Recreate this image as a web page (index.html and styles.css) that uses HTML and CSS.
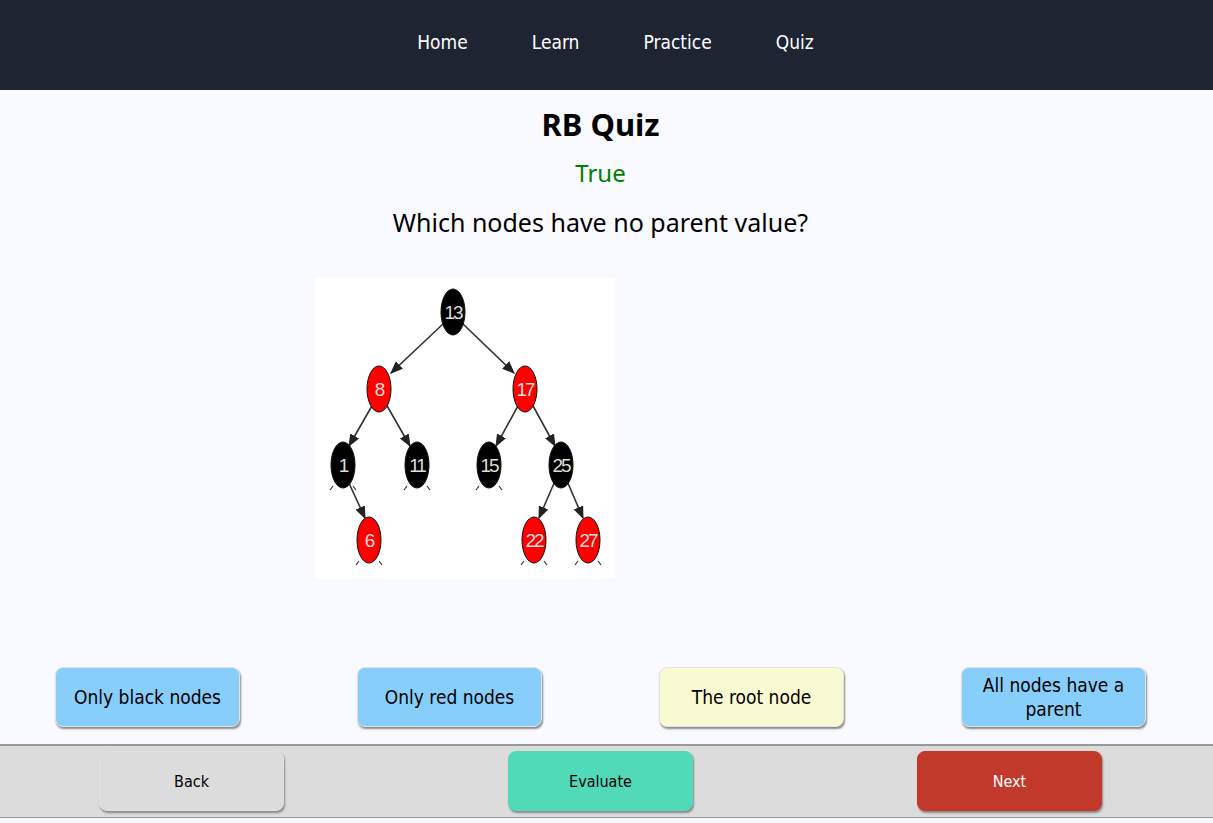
FILE: index.html
```html
<!DOCTYPE html>
<html lang="en">
<head>
<meta charset="utf-8">
<title>RB Quiz</title>
<link rel="stylesheet" href="styles.css">
</head>
<body>
<nav class="topnav">
  <ul class="navlist">
    <li><a href="#">Home</a></li>
    <li><a href="#">Learn</a></li>
    <li><a href="#">Practice</a></li>
    <li><a href="#">Quiz</a></li>
  </ul>
</nav>
<main class="quiz">
  <h1 class="title">RB Quiz</h1>
  <p class="result">True</p>
  <p class="question">Which nodes have no parent value?</p>
  <div class="figure-row">
    <div class="figure">
      <svg width="300" height="300" viewBox="0 0 300 300">
        <defs>
          <marker id="arr" viewBox="0 0 10 10" refX="9" refY="5" markerWidth="8" markerHeight="8" orient="auto-start-reverse">
            <path d="M0 1 L10 5 L0 9 z" fill="#222"/>
          </marker>
        </defs>
        <rect width="300" height="300" fill="#fff"/>
        <g stroke="#333" stroke-width="1.6" fill="none">
          <line x1="128" y1="46" x2="76" y2="95" marker-end="url(#arr)"/>
          <line x1="148" y1="46" x2="199" y2="95" marker-end="url(#arr)"/>
          <line x1="58" y1="126" x2="34" y2="168" marker-end="url(#arr)"/>
          <line x1="71" y1="126" x2="95" y2="168" marker-end="url(#arr)"/>
          <line x1="204" y1="126" x2="181" y2="168" marker-end="url(#arr)"/>
          <line x1="217" y1="126" x2="240" y2="168" marker-end="url(#arr)"/>
          <line x1="33" y1="203" x2="50" y2="240" marker-end="url(#arr)"/>
          <line x1="240" y1="203" x2="224" y2="240" marker-end="url(#arr)"/>
          <line x1="252" y1="203" x2="268" y2="240" marker-end="url(#arr)"/>
        </g>
        <g stroke="#333" stroke-width="1.2">
          <path d="M18 208 l-3 4 M38 208 l3 4 M92 208 l-3 4 M112 208 l3 4 M164 208 l-3 4 M184 208 l3 4"/>
          <path d="M44 283 l-3 4 M64 283 l3 4 M209 283 l-3 4 M229 283 l3 4 M263 283 l-3 4 M283 283 l3 4"/>
        </g>
        <g stroke="#111" stroke-width="1">
          <ellipse cx="138" cy="34" rx="12" ry="23" fill="#000"/>
          <ellipse cx="64" cy="111" rx="12" ry="23" fill="#f00"/>
          <ellipse cx="210" cy="111" rx="12" ry="23" fill="#f00"/>
          <ellipse cx="28" cy="187" rx="12" ry="23" fill="#000"/>
          <ellipse cx="102" cy="187" rx="12" ry="23" fill="#000"/>
          <ellipse cx="174" cy="187" rx="12" ry="23" fill="#000"/>
          <ellipse cx="246" cy="187" rx="12" ry="23" fill="#000"/>
          <ellipse cx="54" cy="262" rx="12" ry="23" fill="#f00"/>
          <ellipse cx="219" cy="262" rx="12" ry="23" fill="#f00"/>
          <ellipse cx="273" cy="262" rx="12" ry="23" fill="#f00"/>
        </g>
        <g class="nodetext" fill="#ddd" text-anchor="middle">
          <text x="138" y="41">13</text>
          <text x="64" y="118">8</text>
          <text x="210" y="118">17</text>
          <text x="28" y="194">1</text>
          <text x="102" y="194">11</text>
          <text x="174" y="194">15</text>
          <text x="246" y="194">25</text>
          <text x="54" y="269">6</text>
          <text x="219" y="269">22</text>
          <text x="273" y="269">27</text>
        </g>
      </svg>
    </div>
  </div>
  <div class="options">
    <button class="opt opt-blue">Only black nodes</button>
    <button class="opt opt-blue">Only red nodes</button>
    <button class="opt opt-yellow">The root node</button>
    <button class="opt opt-blue">All nodes have a parent</button>
  </div>
</main>
<footer class="actions">
  <button class="act act-back">Back</button>
  <button class="act act-eval">Evaluate</button>
  <button class="act act-next">Next</button>
</footer>
</body>
</html>
```

FILE: styles.css
```css
* { box-sizing: border-box; }

body {
  margin: 0;
  background: #f8faff;
  font-family: "Noto Sans", "Open Sans", sans-serif;
  color: #000;
}

.topnav {
  height: 90px;
  background: #1e2432;
  display: flex;
  align-items: center;
  justify-content: center;
}

.navlist {
  list-style: none;
  margin: 0;
  padding: 0 0 6px 18px;
  display: flex;
  gap: 64px;
}

.navlist a {
  color: #fff;
  text-decoration: none;
  font-family: "DejaVu Sans Condensed", "DejaVu Sans", sans-serif;
  font-size: 19px;
}

.quiz {
  display: flex;
  flex-direction: column;
  align-items: center;
}

.title {
  margin: 14px 12px 0 0;
  font-size: 31px;
  font-weight: 700;
  line-height: 40px;
}

.result {
  margin: 13px 12px 0 0;
  color: #008000;
  font-size: 24px;
  line-height: 32px;
}

.question {
  margin: 17px 12px 0 0;
  font-size: 25px;
  line-height: 32px;
}

.figure-row {
  align-self: stretch;
  display: flex;
  padding-left: 315px;
  margin-top: 40px;
}

.figure {
  width: 300px;
  height: 300px;
}

.figure svg { display: block; }

.nodetext text {
  font-family: "Liberation Sans", sans-serif;
  font-size: 19px;
  letter-spacing: -2px;
}

.options {
  align-self: stretch;
  display: flex;
  gap: 117px;
  padding-left: 55px;
  margin-top: 89px;
  margin-bottom: 17px;
}

.opt, .act {
  font-family: "DejaVu Sans Condensed", "DejaVu Sans", sans-serif;
  color: #000;
  border: 1px solid #e2e2e2;
  border-radius: 8px;
  box-shadow: 1px 2px 2px #8a8a8a;
  cursor: pointer;
}

.opt {
  width: 185px;
  height: 60px;
  font-size: 19px;
  line-height: 24px;
  padding: 0 12px;
}

.opt-blue { background: #87cefa; }
.opt-yellow { background: #fafad2; }

.actions {
  display: flex;
  justify-content: center;
  gap: 224px;
  padding: 5px 12px 0 0;
  height: 74px;
  background: #dcdcdc;
  border-top: 2px solid #999;
  border-bottom: 1px solid #999;
}

.act {
  width: 185px;
  height: 60px;
  font-size: 16px;
}

.act-back { background: #dcdcdc; }
.act-eval { background: #50dab8; border-color: #50dab8; }
.act-next { background: #c0392b; border-color: #c0392b; color: #fff; }
```
